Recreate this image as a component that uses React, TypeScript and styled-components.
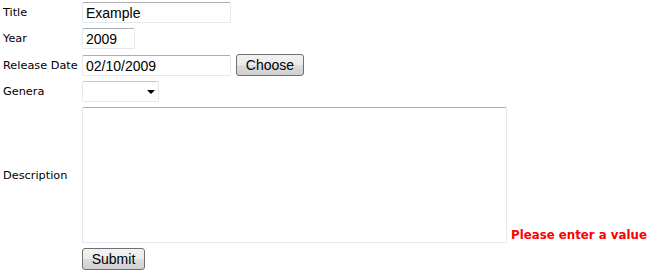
import React from 'react'
import styled, { createGlobalStyle } from 'styled-components'

const GlobalStyle = createGlobalStyle`
  html, body {
    margin: 0;
    padding: 0;
    background: #ffffff;
  }
`

const Form = styled.form`
  display: grid;
  grid-template-columns: 79px auto;
  row-gap: 5px;
  padding: 2px 0 0 3px;
  font-family: 'DejaVu Sans', Verdana, sans-serif;
  font-size: 11.3px;
  color: #000;
  align-items: center;
`

const Label = styled.label`
  white-space: nowrap;
`

const Field = styled.div`
  display: flex;
  align-items: flex-end;
  gap: 5px;
`

const TextInput = styled.input<{ w: number }>`
  box-sizing: border-box;
  width: ${(p) => p.w}px;
  height: 21px;
  margin: 0;
  padding: 1px 3px 0;
  border: 1px solid #e3e9ef;
  border-top-color: #abadb3;
  border-radius: 2px;
  background: #fff;
  font-family: 'Liberation Sans', Arial, sans-serif;
  font-size: 14px;
  color: #000;
  outline: none;
`

const Button = styled.button<{ w: number }>`
  box-sizing: border-box;
  width: ${(p) => p.w}px;
  height: 22px;
  margin: 0;
  padding: 0;
  border: 1px solid #707070;
  border-radius: 3px;
  background: linear-gradient(#f2f2f2 0%, #ebebeb 50%, #dddddd 51%, #cfcfcf 100%);
  font-family: 'Liberation Sans', Arial, sans-serif;
  font-size: 14px;
  color: #000;
`

const SelectBox = styled.div`
  box-sizing: border-box;
  width: 77px;
  height: 21px;
  border: 1px solid #e3e9ef;
  border-top-color: #c5c8cf;
  border-radius: 2px;
  background: #fff;
  display: flex;
  align-items: center;
  justify-content: flex-end;
  padding-right: 3px;
`

const Arrow = styled.span`
  width: 0;
  height: 0;
  border-left: 4px solid transparent;
  border-right: 4px solid transparent;
  border-top: 4px solid #000;
`

const TextArea = styled.textarea`
  box-sizing: border-box;
  width: 425px;
  height: 136px;
  margin: 0;
  padding: 2px;
  border: 1px solid #e3e9ef;
  border-top-color: #abadb3;
  border-radius: 2px;
  resize: none;
  outline: none;
  display: block;
`

const ErrorText = styled.span`
  color: #ff0000;
  font-weight: bold;
  font-size: 11.8px;
  line-height: 1;
  margin-bottom: 1px;
  margin-left: -1px;
`

export default function App() {
  return (
    <>
      <GlobalStyle />
      <Form onSubmit={(e) => e.preventDefault()}>
        <Label>Title</Label>
        <Field>
          <TextInput w={149} defaultValue="Example" />
        </Field>

        <Label>Year</Label>
        <Field>
          <TextInput w={53} defaultValue="2009" />
        </Field>

        <Label>Release Date</Label>
        <Field>
          <TextInput w={149} defaultValue="02/10/2009" />
          <Button type="button" w={68}>Choose</Button>
        </Field>

        <Label>Genera</Label>
        <Field>
          <SelectBox>
            <Arrow />
          </SelectBox>
        </Field>

        <Label>Description</Label>
        <Field>
          <TextArea />
          <ErrorText>Please enter a value</ErrorText>
        </Field>

        <span />
        <Field>
          <Button type="submit" w={63}>Submit</Button>
        </Field>
      </Form>
    </>
  )
}
